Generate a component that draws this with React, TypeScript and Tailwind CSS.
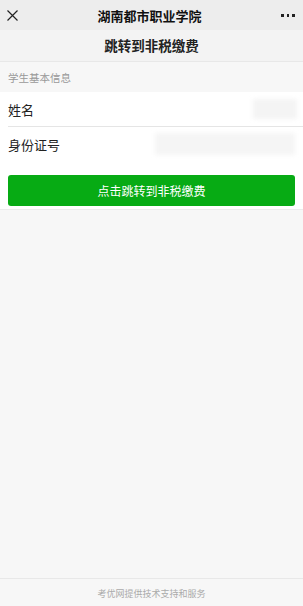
import React from 'react';

const font = { fontFamily: '"Noto Sans CJK SC", "Noto Sans", sans-serif' };

export default function App() {
    return (
        <div
            className="flex h-[606px] w-[303px] flex-col overflow-hidden bg-[#f7f7f7] font-['Noto_Sans_CJK_SC',sans-serif]"
            style={font}
        >
            {/* top bar */}
            <div className="flex h-[30px] shrink-0 items-center justify-between bg-[#ededed] px-[7px]">
                <svg width="11" height="11" viewBox="0 0 11 11" className="text-[#222]">
                    <path d="M0.5 0.5 L10.5 10.5 M10.5 0.5 L0.5 10.5" stroke="currentColor" strokeWidth="1.2" />
                </svg>
                <span className="text-[13px] font-semibold leading-none text-[#111]">湖南都市职业学院</span>
                <div className="flex w-[15px] items-center gap-[3px] pr-[1px]">
                    <span className="h-[3px] w-[3px] bg-[#222]" />
                    <span className="h-[3px] w-[3px] bg-[#222]" />
                    <span className="h-[3px] w-[3px] bg-[#222]" />
                </div>
            </div>

            {/* page title */}
            <div className="flex h-[32px] shrink-0 items-center justify-center border-b border-[#e8e8e8] bg-[#f3f3f3]">
                <span className="text-[13.5px] font-semibold leading-none text-[#222]">跳转到非税缴费</span>
            </div>

            {/* section header */}
            <div className="flex h-[30px] shrink-0 items-center bg-[#f7f7f7] px-[8px] pt-[3px]">
                <span className="text-[10.5px] leading-none text-[#999]">学生基本信息</span>
            </div>

            {/* info rows */}
            <div className="shrink-0 bg-white">
                <div className="flex h-[34px] items-center justify-between pl-[8px] pr-[6px]">
                    <span className="text-[13px] leading-none text-[#222]">姓名</span>
                    <div className="h-[20px] w-[44px] bg-[#f4f4f4] blur-[2px]" />
                </div>
                <div className="ml-[8px] h-px bg-[#e5e5e5]" />
                <div className="flex h-[34px] items-center justify-between pl-[8px] pr-[8px]">
                    <span className="text-[13px] leading-none text-[#222]">身份证号</span>
                    <div className="h-[22px] w-[140px] bg-[#f5f5f5] blur-[2px]" />
                </div>
                <div className="px-[8px] pb-[3px] pt-[14px]">
                    <button className="flex h-[31px] w-full items-center justify-center rounded-[3px] bg-[#07ab14] text-[12px] leading-none text-white">
                        点击跳转到非税缴费
                    </button>
                </div>
            </div>

            <div className="flex-1 border-t border-[#ececec]" />

            {/* footer */}
            <div className="flex h-[28px] shrink-0 items-center justify-center border-t border-[#e8e8e8] bg-[#f7f7f7] pt-[2px]">
                <span className="text-[9px] leading-none text-[#aaa]">考优网提供技术支持和服务</span>
            </div>
        </div>
    );
}
